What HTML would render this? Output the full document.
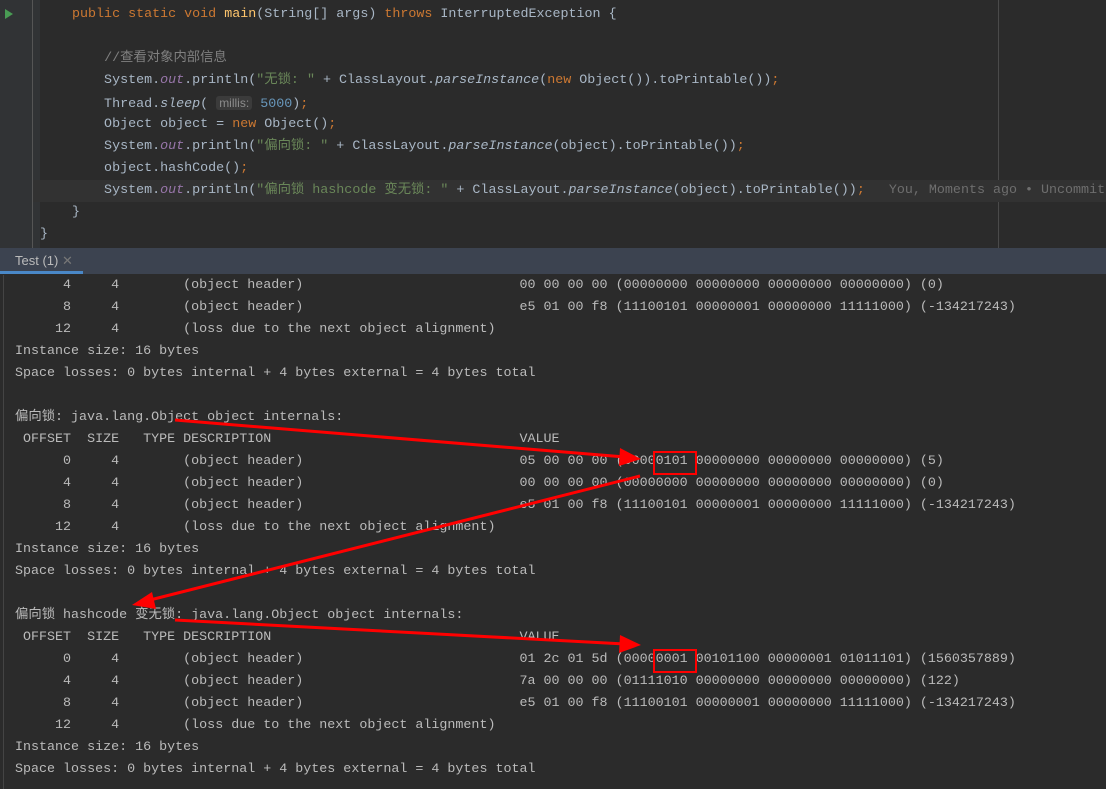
<!DOCTYPE html>
<html><head><meta charset="utf-8"><style>
body{margin:0;width:1106px;height:789px;background:#2b2b2b;overflow:hidden;position:relative;font-family:"Liberation Mono","Noto Sans CJK SC",monospace;font-size:13px}
.ed{position:absolute;left:0;top:0;width:1106px;height:248px;background:#2b2b2b;overflow:hidden}
.gut{position:absolute;left:0;top:0;width:40px;height:248px;background:#313335}
.gl{position:absolute;left:32px;top:0;width:1px;height:248px;background:#555}
.mg{position:absolute;left:998px;top:0;width:1px;height:248px;background:#4a4a4a}
.hl{position:absolute;left:33px;top:180px;width:1073px;height:22px;background:#323232}
.code,.con{margin:0;font-family:"Liberation Mono","Noto Sans CJK SC",monospace;font-size:13.35px;line-height:22px;white-space:pre;position:absolute}
.code{left:40px;top:4px;color:#a9b7c6}
.code div,.con div{height:22px;overflow:visible}
.k{color:#cc7832}.c{color:#808080}.s{color:#6a8759}.o{color:#9876aa;font-style:italic}.i{font-style:italic}.n{color:#6897bb}.f{color:#ffc66d}
.hint{background:#3b3b3b;color:#8c8c8c;font-family:"Liberation Sans",sans-serif;font-size:12px;border-radius:3px;padding:0 3px}
.tab{position:absolute;left:0;top:248px;width:1106px;height:26px;background:#3c4350}
.tab span{position:absolute;left:15px;top:5px;color:#bbb;font-family:"Liberation Sans",sans-serif;font-size:13px}
.tab i{position:absolute;left:0;bottom:0;width:83px;height:3px;background:#4a88c7}
.con{left:15px;top:275px;color:#bbbbbb}
.cl{position:absolute;left:3px;top:275px;width:1px;height:514px;background:#444}
</style></head><body>
<div class="ed"><div class="gut"></div><div class="gl"></div><div class="mg"></div><div class="hl"></div>
<svg style="position:absolute;left:5px;top:9px" width="10" height="12"><polygon points="0,0 8,5 0,10" fill="#499c54"/></svg>
<div class="code"><div>    <span class="k">public static void </span><span class="f">main</span>(String[] args) <span class="k">throws </span>InterruptedException {</div><div> </div><div>        <span class="c">//查看对象内部信息</span></div><div>        System.<span class="o">out</span>.println(<span class="s">"无锁: "</span> + ClassLayout.<span class="i">parseInstance</span>(<span class="k">new </span>Object()).toPrintable())<span class="k">;</span></div><div>        Thread.<span class="i">sleep</span>( <span class="hint">millis:</span> <span class="n">5000</span>)<span class="k">;</span></div><div>        Object object = <span class="k">new </span>Object()<span class="k">;</span></div><div>        System.<span class="o">out</span>.println(<span class="s">"偏向锁: "</span> + ClassLayout.<span class="i">parseInstance</span>(object).toPrintable())<span class="k">;</span></div><div>        object.hashCode()<span class="k">;</span></div><div>        System.<span class="o">out</span>.println(<span class="s">"偏向锁 hashcode 变无锁: "</span> + ClassLayout.<span class="i">parseInstance</span>(object).toPrintable())<span class="k">;</span>   <span style="color:#6e6e6e">You, Moments ago • Uncommitted changes</span></div><div>    }</div><div>}</div></div></div>
<div class="tab"><span>Test (1) <b style="color:#777;font-weight:normal">✕</b></span><i></i></div>
<div class="cl"></div>
<div class="con"><div>      4     4        (object header)                           00 00 00 00 (00000000 00000000 00000000 00000000) (0)</div><div>      8     4        (object header)                           e5 01 00 f8 (11100101 00000001 00000000 11111000) (-134217243)</div><div>     12     4        (loss due to the next object alignment)</div><div>Instance size: 16 bytes</div><div>Space losses: 0 bytes internal + 4 bytes external = 4 bytes total</div><div> </div><div>偏向锁: java.lang.Object object internals:</div><div> OFFSET  SIZE   TYPE DESCRIPTION                               VALUE</div><div>      0     4        (object header)                           05 00 00 00 (00000101 00000000 00000000 00000000) (5)</div><div>      4     4        (object header)                           00 00 00 00 (00000000 00000000 00000000 00000000) (0)</div><div>      8     4        (object header)                           e5 01 00 f8 (11100101 00000001 00000000 11111000) (-134217243)</div><div>     12     4        (loss due to the next object alignment)</div><div>Instance size: 16 bytes</div><div>Space losses: 0 bytes internal + 4 bytes external = 4 bytes total</div><div> </div><div>偏向锁 hashcode 变无锁: java.lang.Object object internals:</div><div> OFFSET  SIZE   TYPE DESCRIPTION                               VALUE</div><div>      0     4        (object header)                           01 2c 01 5d (00000001 00101100 00000001 01011101) (1560357889)</div><div>      4     4        (object header)                           7a 00 00 00 (01111010 00000000 00000000 00000000) (122)</div><div>      8     4        (object header)                           e5 01 00 f8 (11100101 00000001 00000000 11111000) (-134217243)</div><div>     12     4        (loss due to the next object alignment)</div><div>Instance size: 16 bytes</div><div>Space losses: 0 bytes internal + 4 bytes external = 4 bytes total</div></div>
<svg style="position:absolute;left:0;top:0" width="1106" height="789">
<g stroke="#f00" stroke-width="3" fill="none">
<line x1="175" y1="420" x2="625" y2="457"/>
<line x1="640" y1="476" x2="150" y2="600"/>
<line x1="175" y1="620" x2="625" y2="644"/>
<rect x="654" y="452" width="42" height="22" stroke-width="2"/>
<rect x="654" y="650" width="42" height="22" stroke-width="2"/>
</g>
<g fill="#f00">
<polygon points="641,459 620,448 619,466"/>
<polygon points="132,605 152,592 156,609"/>
<polygon points="641,645 620,635 619,653"/>
</g>
</svg>
</body></html>
